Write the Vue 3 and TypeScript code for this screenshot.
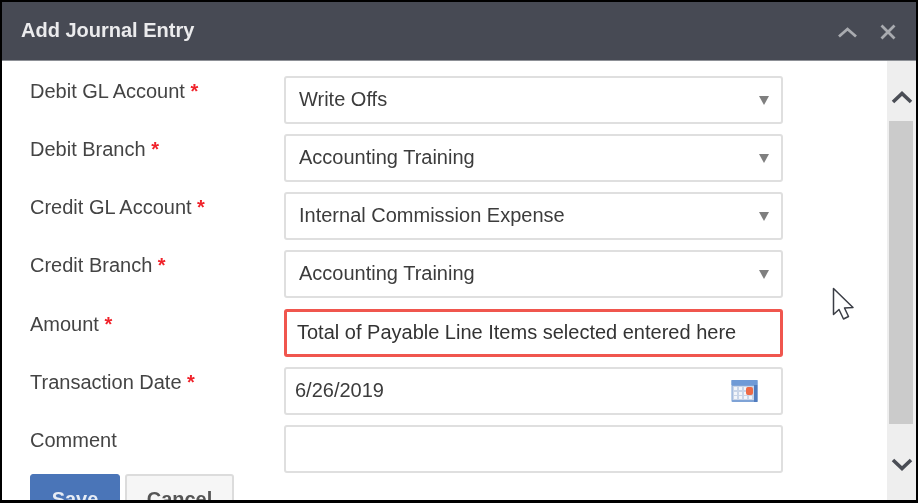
<script setup lang="ts">
interface Field {
  label: string;
  value: string;
  kind: 'select' | 'input' | 'date' | 'highlight';
  required: boolean;
}

const fields: Field[] = [
  { label: 'Debit GL Account', value: 'Write Offs', kind: 'select', required: true },
  { label: 'Debit Branch', value: 'Accounting Training', kind: 'select', required: true },
  { label: 'Credit GL Account', value: 'Internal Commission Expense', kind: 'select', required: true },
  { label: 'Credit Branch', value: 'Accounting Training', kind: 'select', required: true },
  { label: 'Amount', value: 'Total of Payable Line Items selected entered here', kind: 'highlight', required: true },
  { label: 'Transaction Date', value: '6/26/2019', kind: 'date', required: true },
  { label: 'Comment', value: '', kind: 'input', required: false }
];
</script>

<template>
  <div class="frame">
    <div class="dialog">
      <header class="title-bar">
        <h1 class="title">Add Journal Entry</h1>
        <div class="window-btns">
          <svg width="20" height="12" viewBox="0 0 20 12"><path d="M1 10.500 9.500 3l8.500 7.500" fill="none" stroke="#a9abb0" stroke-width="2.800" /></svg>
          <svg width="16" height="16" viewBox="0 0 16 16"><path d="M1.500 1.500l13 13M14.500 1.500l-13 13" fill="none" stroke="#a9abb0" stroke-width="2.800" /></svg>
        </div>
      </header>

      <div class="body">
        <main class="form">
          <div v-for="field in fields" :key="field.label" class="row">
            <label class="field-label">
              {{ field.label }}<span v-if="field.required" class="req"> *</span>
            </label>
            <div class="control" :class="field.kind">
              <span class="control-text">{{ field.value }}</span>
              <span v-if="field.kind === 'select'" class="caret"></span>
              <svg v-if="field.kind === 'date'" class="cal" width="27" height="24" viewBox="0 0 27 24">
                <rect x="0.500" y="1" width="26" height="22" rx="1" fill="#7fa3d6" />
                <rect x="0.500" y="1" width="26" height="5" fill="#6f9ad6" />
                <rect x="23" y="6" width="3.500" height="17" fill="#4f7bbd" />
                <rect x="1.500" y="7" width="21.500" height="14" fill="#c9d5e8" />
                <g fill="#f2f5fa">
                  <rect x="3" y="8" width="3" height="3" /><rect x="8" y="8" width="3" height="3" /><rect x="13" y="8" width="3" height="3" />
                  <rect x="3" y="13" width="3" height="3" /><rect x="8" y="13" width="3" height="3" /><rect x="13" y="13" width="3" height="3" />
                  <rect x="3" y="17" width="3" height="3" /><rect x="8" y="17" width="3" height="3" /><rect x="13" y="17" width="3" height="3" /><rect x="18" y="17" width="3" height="3" />
                </g>
                <rect x="15" y="8" width="7" height="8" rx="2" fill="#ee6a45" />
              </svg>
            </div>
          </div>
          <div class="actions">
            <button class="btn save">Save</button>
            <button class="btn cancel">Cancel</button>
          </div>
        </main>

        <aside class="scrollbar">
          <svg class="arrow" width="22" height="14" viewBox="0 0 22 14"><path d="M2 12 11 3.500 20 12" fill="none" stroke="#4a4d55" stroke-width="3.600" /></svg>
          <div class="thumb"></div>
          <svg class="arrow down" width="22" height="14" viewBox="0 0 22 14"><path d="M2 2l9 8.500L20 2" fill="none" stroke="#4a4d55" stroke-width="3.600" /></svg>
        </aside>
      </div>

      <!-- mouse pointer sitting on top of the dialog -->
      <svg class="pointer" width="23" height="35" viewBox="0 0 23 35">
        <path d="M1.500 1.500v26l5.500-5 4.500 9.500 5-2.500-4-8.500 8.500-.5z" fill="#fff" stroke="#3a3d45" stroke-width="1.500" stroke-linejoin="round" />
      </svg>
    </div>
  </div>
</template>

<style scoped>
.frame {
  width: 918px;
  height: 503px;
  box-sizing: border-box;
  padding: 2px 2px 3px 2px;
  background: #000;
  overflow: hidden;
  filter: blur(0.6px);
}

.dialog {
  position: relative;
  height: 100%;
  display: flex;
  flex-direction: column;
  background: #fff;
  overflow: hidden;
  font-family: "Liberation Sans", Arial, sans-serif;
}

.title-bar {
  flex: 0 0 59px;
  display: flex;
  align-items: center;
  justify-content: space-between;
  padding: 0 20px 2px 19px;
  background: #474a54;
  border-bottom: 1px solid #8d9096;
  box-sizing: border-box;
}

.title {
  margin: 0;
  font-size: 20px;
  font-weight: 700;
  color: #ebebed;
}

.window-btns {
  display: flex;
  align-items: center;
  gap: 22px;
  padding-top: 4px;
}

.body {
  flex: 1;
  min-height: 0;
  display: flex;
}

.form {
  flex: 1;
  padding: 15px 0 0 28px;
}

.row {
  display: flex;
  height: 48px;
  margin-bottom: 10.170px;
}

.field-label {
  width: 254px;
  padding-top: 4px;
  font-size: 20px;
  line-height: 22px;
  color: #444;
}

.req {
  color: #f0232b;
  font-weight: 700;
}

.control {
  position: relative;
  width: 499px;
  height: 48px;
  box-sizing: border-box;
  display: flex;
  align-items: center;
  justify-content: space-between;
  padding: 0 10px 0 13px;
  border: 2px solid #dfdfdf;
  border-radius: 3px;
  font-size: 20px;
  color: #3c3c3c;
}

.control.date {
  padding: 0 23px 0 9px;
}

.control.highlight {
  padding-left: 10px;
  border: 3px solid #f0564e;
  color: #333;
}

.control.select .control-text {
  padding-bottom: 2px;
}

.caret {
  width: 0;
  height: 0;
  margin-right: 2px;
  border-left: 5.500px solid transparent;
  border-right: 5.500px solid transparent;
  border-top: 9px solid #7f7f7f;
}

.actions {
  display: flex;
  gap: 5px;
  margin-top: -9px;
}

.btn {
  width: 90px;
  height: 48px;
  padding: 2px 0 0;
  border-radius: 3px;
  font-family: inherit;
  font-size: 20px;
  font-weight: 700;
}

.save {
  background: #4a75b8;
  border: 1px solid #4a75b8;
  color: #e6ecf5;
}

.cancel {
  width: 109px;
  background: #f6f6f6;
  border: 2px solid #dcdcdc;
  color: #555;
}

.scrollbar {
  flex: 0 0 29px;
  display: flex;
  flex-direction: column;
  align-items: center;
  background: #eeeeee;
}

.arrow {
  flex: 0 0 auto;
  margin-top: 29px;
  margin-bottom: 17px;
}

.arrow.down {
  margin-top: 34px;
  margin-bottom: 0;
}

.thumb {
  align-self: stretch;
  margin: 0 3px 0 2px;
  height: 303px;
  flex: 0 0 auto;
  background: #cbcbcb;
}

.pointer {
  position: absolute;
  left: 830px;
  top: 285px;
}
</style>
